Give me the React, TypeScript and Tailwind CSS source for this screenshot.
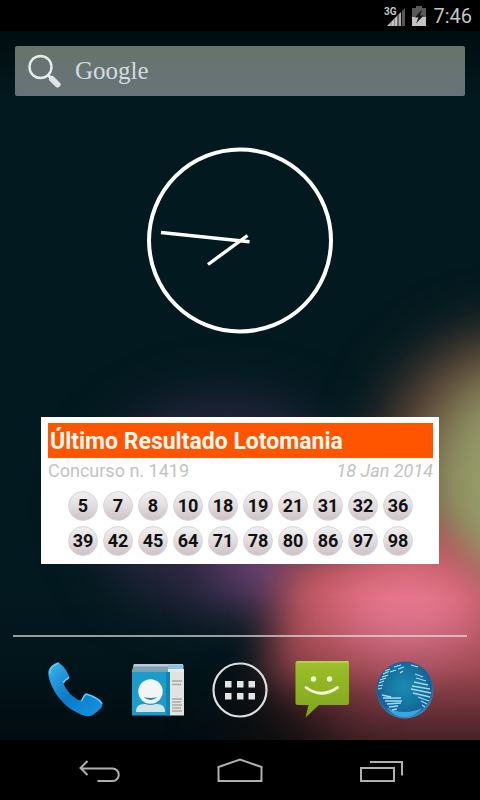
import React from "react";

const DRAWN_NUMBERS = [
  [5, 7, 8, 10, 18, 19, 21, 31, 32, 36],
  [39, 42, 45, 64, 71, 78, 80, 86, 97, 98],
];

function Wallpaper() {
  return (
    <svg
      className="absolute inset-0 h-full w-full"
      viewBox="0 0 480 800"
      preserveAspectRatio="none"
      aria-hidden="true"
    >
      <defs>
        <filter id="soft" x="-100%" y="-100%" width="300%" height="300%" colorInterpolationFilters="sRGB">
          <feGaussianBlur stdDeviation="28" />
        </filter>
        <filter id="edge" x="-60%" y="-60%" width="220%" height="220%" colorInterpolationFilters="sRGB">
          <feGaussianBlur stdDeviation="20" />
        </filter>
        <linearGradient id="shade" x1="0" y1="0" x2="0" y2="1">
          <stop offset="0" stopColor="#000408" stopOpacity="0" />
          <stop offset="0.5" stopColor="#000408" stopOpacity="0.2" />
          <stop offset="1" stopColor="#000408" stopOpacity="0.65" />
        </linearGradient>
        <linearGradient id="topShade" x1="0" y1="0" x2="0" y2="1">
          <stop offset="0" stopColor="#000" stopOpacity="0.5" />
          <stop offset="1" stopColor="#000" stopOpacity="0" />
        </linearGradient>
      </defs>
      <rect width="480" height="800" fill="#02191f" />
      <ellipse cx="225" cy="508" rx="130" ry="108" fill="#2c2740" filter="url(#soft)" />
      <ellipse cx="262" cy="562" rx="46" ry="34" fill="#7a4a82" filter="url(#soft)" />
      <circle cx="520" cy="475" r="148" fill="#5a4034" filter="url(#soft)" />
      <ellipse cx="518" cy="490" rx="92" ry="120" fill="#969c6a" filter="url(#soft)" />
      <path d="M284 560 L430 520 L560 650 L560 860 L370 860 L266 680 Z" fill="#c0565f" filter="url(#edge)" />
      <ellipse cx="408" cy="618" rx="76" ry="48" fill="#ee7d97" filter="url(#soft)" />
      <rect y="595" width="480" height="147" fill="url(#shade)" />
      <ellipse cx="285" cy="735" rx="64" ry="44" fill="#160f0e" opacity="0.7" filter="url(#soft)" />
      <rect y="31" width="480" height="70" fill="url(#topShade)" />
    </svg>
  );
}

function StatusBar() {
  return (
    <header className="flex h-[31px] items-center justify-end bg-black pr-2 text-[#c4c4c4]">
      <svg className="h-[22px] w-[22px]" viewBox="0 0 22 22" role="img" aria-label="3G">
        <text x="0" y="10" fontSize="10" fontWeight="700" fill="#c4c4c4" fontFamily="Roboto, sans-serif">
          3G
        </text>
        <path d="M3 21 L13.5 10.500 V21 Z" fill="#c4c4c4" />
        <path d="M14.500 9.500 L17 7 V21 H14.500 Z" fill="#aaa" />
        <path d="M17.800 6 L21 3 V21 H17.800 Z" fill="#555" />
        <path d="M7 17V21M10.500 13V21M14 10V21" stroke="#777" strokeWidth="0.8" />
      </svg>
      <svg className="ml-1.5 h-[22px] w-[14px]" viewBox="0 0 14 22" role="img" aria-label="Bateria">
        <path d="M4 1H10V3H14V21H0V3H4Z" fill="#585858" />
        <rect y="12" width="14" height="9" fill="#c4c4c4" />
        <path d="M10 4.500 L3 12.500 H6.500 L4 18.500 L11.500 10.500 H7.800 Z" fill="#111" />
      </svg>
      <time className="ml-[7px] text-[20px] leading-6">7:46</time>
    </header>
  );
}

function SearchBar() {
  return (
    <button
      type="button"
      className="mx-[15px] mt-[15px] flex h-[50px] items-center rounded-[2px] bg-linear-to-b from-[#66746b] to-[#687479] pl-3"
    >
      <svg className="h-9 w-9" viewBox="0 0 36 36" fill="none" aria-hidden="true">
        <circle cx="13.500" cy="14" r="11" stroke="#e6edec" strokeWidth="2.400" />
        <path d="M21 22 L24 25" stroke="#e6edec" strokeWidth="3" />
        <path d="M25 26 L30.500 31.500" stroke="#dfe5e5" strokeWidth="6" strokeLinecap="round" />
      </svg>
      <span
        className="ml-3 text-[25px] leading-8 text-[#d3dbe0]"
        style={{ fontFamily: '"Liberation Serif", serif' }}
      >
        Google
      </span>
    </button>
  );
}

function AnalogClock() {
  return (
    <svg
      className="mx-auto mt-[51px] h-[187px] w-[186px]"
      viewBox="0 0 186 187"
      fill="none"
      stroke="#fff"
      role="img"
      aria-label="7:46"
    >
      <circle cx="93" cy="93.500" r="91" strokeWidth="4" />
      <path d="M14 85.500 L102.500 94.700" strokeWidth="3.400" />
      <path d="M61 117.500 L100.500 88.500" strokeWidth="3.400" />
    </svg>
  );
}

function LotteryWidget() {
  return (
    <section className="mx-[41px] mt-[83px] bg-white pt-1.5 pr-1.5 pb-2 pl-[7px]">
      <h1 className="h-[35px] bg-[#ff5500] pt-px pl-0.5 text-[23px] leading-9 font-bold text-[#fff8ee]">
        Último Resultado Lotomania
      </h1>
      <div className="flex h-[33px] justify-between pt-px text-[18px] leading-6 text-[#c2c2c2]">
        <p>Concurso n. 1419</p>
        <p className="italic">18 Jan 2014</p>
      </div>
      <div className="flex flex-col items-center gap-[5px]">
        {DRAWN_NUMBERS.map((row) => (
          <ul key={row[0]} className="flex gap-[5px]">
            {row.map((n) => (
              <li
                key={n}
                className="flex size-[30px] items-center justify-center rounded-full border border-[#d9d4d7] bg-linear-to-b from-[#f1eff0] via-[#e2dddf] to-[#cdc2c7] text-[18px] leading-none font-bold text-[#111]"
              >
                {n}
              </li>
            ))}
          </ul>
        ))}
      </div>
    </section>
  );
}

function PhoneIcon() {
  return (
    <svg className="size-[60px]" viewBox="0 0 60 60" aria-hidden="true">
      <defs>
        <linearGradient id="phone" x1="0" y1="0" x2="1" y2="1">
          <stop offset="0" stopColor="#3cb4ec" />
          <stop offset="0.5" stopColor="#0b79c8" />
          <stop offset="1" stopColor="#1496e4" />
        </linearGradient>
      </defs>
      <path
        d="M13.500 2.500 C8 3.500 3 8 3.300 14 C5 28 17 46 33 53 C40 57 46 57 49 54 C53 51 58 48 57.500 43 C54 38 48 35 41 33.500 C38 34 38 38 36 40.500 C30 40 20 30 18.500 22.500 C20 20 24 20 24.300 17 C22 11 19 6 13.500 2.500 Z"
        fill="url(#phone)"
      />
      <path
        d="M13.500 3 C8 5 4 9 5 14 M24 17 C22 20 19 20 18.500 23 M41 34 C48 36 54 39 57 43.500 M41 34 C38 36 38 40 36 41"
        stroke="#5fd0f8"
        strokeWidth="1.500"
        fill="none"
      />
    </svg>
  );
}

function PeopleIcon() {
  return (
    <svg className="size-[60px]" viewBox="0 0 60 60" aria-hidden="true">
      <path d="M6 4H42V12H3.500Z" fill="#7fa0ae" />
      <path d="M6 4H55V6.500H5Z" fill="#b3ccd6" />
      <path d="M40 5H55.500V12H40Z" fill="#8fc3dc" />
      <path d="M40 9H56V12H40Z" fill="#e4eaec" />
      <rect x="4" y="12" width="38" height="43.500" fill="#1c9ccb" />
      <path d="M38 12H42V55.500H38Z" fill="#1683ad" />
      <path d="M42 12H56V55.500H42Z" fill="#e2e2e2" />
      <path d="M44 21H54M44 24.500H53M44 39H54M44 42H53M44 45H54M44 48H53M44 51H54" stroke="#aaa" strokeWidth="1.400" />
      <path d="M8 52 C8 43 15 44 22.500 44 C30 44 37 43 37 52 Z" fill="#d5e2e8" />
      <circle cx="22.500" cy="32" r="13" fill="#1c9ccb" />
      <circle cx="22.500" cy="31.500" r="12.200" fill="#f1f5f6" />
      <path d="M15.500 37 Q22.500 39 29.500 37 Q22.500 43 15.500 37Z" fill="#23849f" />
    </svg>
  );
}

function AppsIcon() {
  return (
    <svg className="size-[60px]" viewBox="0 0 60 60" aria-hidden="true">
      <circle cx="30" cy="30" r="26.500" fill="#0b0d10" fillOpacity="0.35" stroke="#dedede" strokeWidth="2.200" />
      <path
        d="M15 21H21.500V27.500H15ZM27 21H33.500V27.500H27ZM38.500 21H45V27.500H38.500ZM15 33H21.500V39.500H15ZM27 33H33.500V39.500H27ZM38.500 33H45V39.500H38.500Z"
        fill="#e4e4e4"
      />
    </svg>
  );
}

function MessagesIcon() {
  return (
    <svg className="size-[60px]" viewBox="0 0 60 60" aria-hidden="true">
      <defs>
        <linearGradient id="sms" x1="0" y1="0" x2="0" y2="1">
          <stop offset="0" stopColor="#9dc02a" />
          <stop offset="1" stopColor="#7da41b" />
        </linearGradient>
      </defs>
      <path
        d="M5.500 1H55.500Q57 1 57 3V43Q57 45 55 45H27L13.500 57.500L16.500 45H5.500Q3.500 45 3.500 43V3Q3.500 1 5.500 1Z"
        fill="url(#sms)"
      />
      <path d="M4.500 2H56.500" stroke="#bfd565" strokeWidth="1.400" />
      <circle cx="21.500" cy="19" r="2.700" fill="#f3fbc9" />
      <circle cx="37.500" cy="19" r="2.700" fill="#f3fbc9" />
      <path d="M14 27.500 Q29.500 39 45.500 27.500" stroke="#f6fcd8" strokeWidth="2.800" strokeLinecap="round" fill="none" />
    </svg>
  );
}

function GlobeIcon() {
  return (
    <svg className="size-[60px]" viewBox="0 0 60 60" fill="none" aria-hidden="true">
      <defs>
        <radialGradient id="globe" cx="0.48" cy="0.45" r="0.55">
          <stop offset="0" stopColor="#1d8ab4" />
          <stop offset="0.6" stopColor="#13739f" />
          <stop offset="0.87" stopColor="#195f98" />
          <stop offset="1" stopColor="#4289bd" />
        </radialGradient>
      </defs>
      <circle cx="30" cy="30" r="28.500" fill="url(#globe)" />
      <path d="M12 48 Q30 56 47 48 Q40 57 30 57 Q19 57 12 48Z" fill="#35a9df" />
      <path
        d="M10 11 L15 9 M8 14 L14 11.500 M7 17 L13 15 M5 20 L11 18 M4 23 L9 21 M3 26 L8 25 M3 29 L7 28 M15 12 L21 10 M19 7 L26 5 M23 9 L29 7 M25 13 L28 11 M36 5 L43 7"
        stroke="#b4e6f5"
        strokeWidth="1.200"
      />
      <path
        d="M7 35 L16 37 M8 38 L26 38 M10 41 L27 41 M12 44 L26 43 M14 47 L23 46 M17 50 L22 49 M40 14 L48 17 M41 18 L51 21 M39 22 L53 25 M37 26 L55 29 M36 29 L56 33 M38 33 L55 37 M43 37 L54 41 M46 41 L52 44 M47 45 L50 47"
        stroke="#a3d9f1"
        strokeWidth="1.300"
      />
    </svg>
  );
}

const DOCK = [
  { label: "Telefone", Icon: PhoneIcon },
  { label: "Contatos", Icon: PeopleIcon },
  { label: "Aplicativos", Icon: AppsIcon },
  { label: "Mensagens", Icon: MessagesIcon },
  { label: "Navegador", Icon: GlobeIcon },
];

function Dock() {
  return (
    <div className="mt-auto">
      <hr className="mx-[13px] h-[2px] border-0 bg-[#e6e6e6]/65" />
      <nav className="grid h-[103px] grid-cols-5 items-center px-[34px] pt-[3px]">
        {DOCK.map(({ label, Icon }) => (
          <button key={label} type="button" aria-label={label} className="flex justify-center">
            <Icon />
          </button>
        ))}
      </nav>
    </div>
  );
}

function NavigationBar() {
  return (
    <footer className="grid h-[60px] grid-cols-3 items-center bg-black px-[29px] pt-1">
      <button type="button" aria-label="Voltar" className="flex justify-center">
        <svg className="h-8 w-12" viewBox="0 0 48 32" fill="none" stroke="#b0b0b0" strokeWidth="2" aria-hidden="true">
          <path d="M12.500 5 L5.500 12 L12.500 19 M6 12.500 H37.500 A6 6 0 0 1 37.500 25 H22.500" />
        </svg>
      </button>
      <button type="button" aria-label="Início" className="flex justify-center">
        <svg className="h-8 w-12" viewBox="0 0 48 32" fill="none" stroke="#b0b0b0" strokeWidth="2" aria-hidden="true">
          <path d="M2.500 25 V11 L24 3.500 L45.500 11 V25 Z" />
        </svg>
      </button>
      <button type="button" aria-label="Recentes" className="flex justify-center">
        <svg className="h-8 w-12" viewBox="0 0 48 32" fill="none" stroke="#b0b0b0" strokeWidth="2" aria-hidden="true">
          <path d="M4 12 H37 V25 H4 Z M13 6 H45 V19.500" />
        </svg>
      </button>
    </footer>
  );
}

export default function App() {
  return (
    <div
      className="relative isolate flex min-h-screen flex-col overflow-hidden bg-[#02191f]"
      style={{ fontFamily: 'Roboto, "Noto Sans", sans-serif' }}
    >
      <div className="absolute inset-0 -z-10">
        <Wallpaper />
      </div>
      <StatusBar />
      <main className="flex flex-1 flex-col">
        <SearchBar />
        <AnalogClock />
        <LotteryWidget />
        <Dock />
      </main>
      <NavigationBar />
    </div>
  );
}
